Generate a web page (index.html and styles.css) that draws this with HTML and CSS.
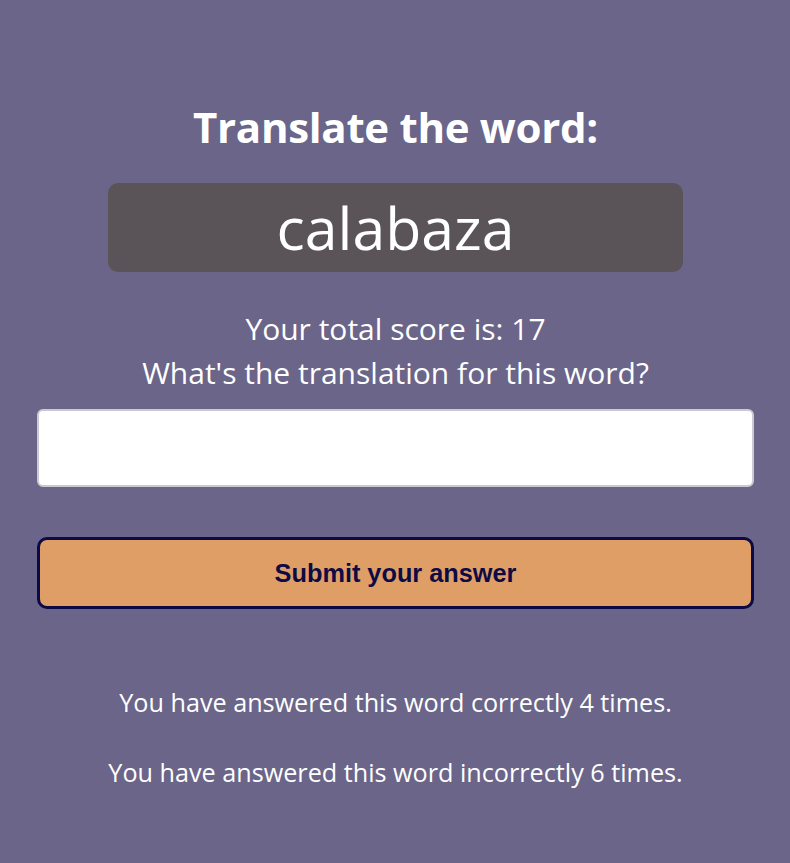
FILE: index.html
```html
<!DOCTYPE html>
<html lang="en">
<head>
<meta charset="utf-8">
<title>Translate the word</title>
<link rel="stylesheet" href="styles.css">
</head>
<body>
<main class="app">
  <h1 class="title">Translate the word:</h1>
  <div class="word">calabaza</div>
  <p class="score">Your total score is: 17</p>
  <p class="prompt">What's the translation for this word?</p>
  <input class="answer" type="text" aria-label="Your answer">
  <button class="submit" type="button">Submit your answer</button>
  <p class="stat stat-first">You have answered this word correctly 4 times.</p>
  <p class="stat stat-second">You have answered this word incorrectly 6 times.</p>
</main>
</body>
</html>
```

FILE: styles.css
```css
html, body {
  margin: 0;
  padding: 0;
  background: #6a6589;
}

body {
  font-family: "Open Sans", "Noto Sans", sans-serif;
  color: #ffffff;
}

.app {
  display: flex;
  flex-direction: column;
  align-items: center;
  padding: 0 36px 0 37px;
}

.title {
  margin: 101px 0 0;
  font-size: 42px;
  line-height: 52px;
  font-weight: 700;
  letter-spacing: -0.3px;
}

.word {
  margin-top: 30px;
  width: 575px;
  height: 89px;
  line-height: 89px;
  text-align: center;
  font-size: 59px;
  background: #5a5459;
  border-radius: 10px;
}

.score,
.prompt {
  margin: 0;
  font-size: 30px;
  line-height: 44px;
}

.score {
  margin-top: 35px;
}

.answer {
  box-sizing: border-box;
  margin-top: 14px;
  width: 100%;
  height: 78px;
  background: #ffffff;
  border: 2px solid #cbcace;
  border-radius: 6px;
  outline: none;
}

.submit {
  box-sizing: border-box;
  margin-top: 50px;
  width: 100%;
  height: 72px;
  background: #e09e67;
  border: 3px solid #0b0947;
  border-radius: 10px;
  font-family: "Liberation Sans", Arial, sans-serif;
  font-weight: 700;
  font-size: 25.3px;
  color: #0d0b45;
}

.stat {
  margin: 0;
  font-size: 25.2px;
  line-height: 32px;
}

.stat-first {
  margin-top: 77px;
}

.stat-second {
  margin-top: 38px;
}
```
